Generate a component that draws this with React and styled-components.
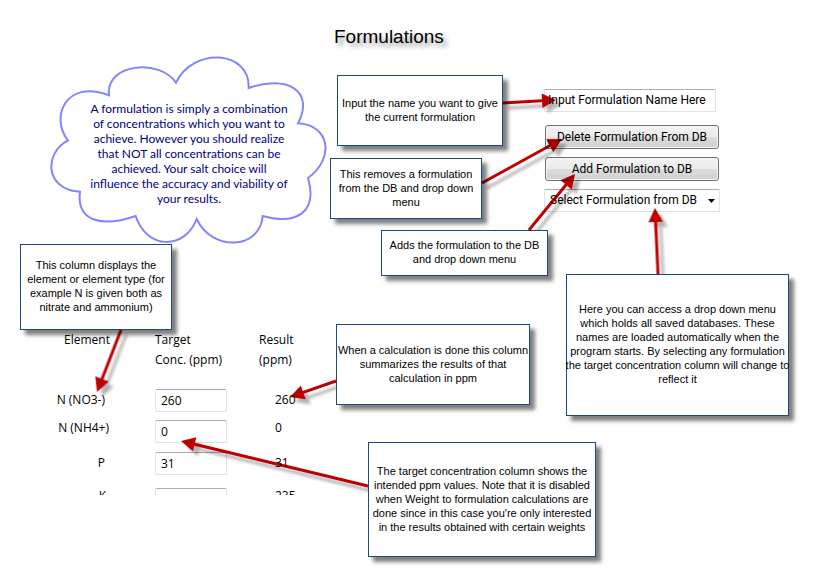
import React from "react";
import styled, { createGlobalStyle } from "styled-components";

const GlobalStyle = createGlobalStyle`
  * { box-sizing: border-box; }
  body {
    margin: 0;
    background: #fff;
    color: #000;
    font-family: "Segoe UI", "Open Sans", "Noto Sans", sans-serif;
    font-size: 12px;
  }
`;

const Page = styled.main`
  position: relative;
  display: flex;
  flex-direction: column;
  min-height: 100vh;
  padding: 25px 0 24px;
  overflow: hidden;
`;

const Title = styled.h1`
  margin: 0 0 0 334px;
  font: 400 19px/24px "Liberation Sans", Arial, sans-serif;
  text-shadow: 4px 4px 4px rgba(0, 0, 0, 0.4);
`;

const Form = styled.form`
  display: flex;
  flex-direction: column;
  align-items: flex-start;
  gap: 8px;
  margin: 40px 0 0 544px;
  font-family: "Segoe UI", Roboto, sans-serif;
`;

const NameInput = styled.input`
  width: 172px;
  height: 23px;
  margin-bottom: 5px;
  padding: 0 3px 1px;
  border: 1px solid #e2e3ea;
  border-top-color: #abadb3;
  border-radius: 1px;
  background: #fff;
  font: inherit;
  color: inherit;
`;

const FormButton = styled.button`
  width: 174px;
  height: 24px;
  margin-left: 1px;
  padding: 0;
  border: 1px solid #707070;
  border-radius: 3px;
  background: linear-gradient(#f2f2f2, #ebebeb 48%, #dddddd 52%, #cfcfcf);
  box-shadow: inset 0 0 0 1px #f8f8f8;
  font: inherit;
  color: inherit;
`;

const SelectWrap = styled.div`
  display: grid;
  align-items: center;
  width: 176px;

  & > * { grid-area: 1 / 1; }
`;

const FormulationSelect = styled.select`
  appearance: none;
  width: 100%;
  height: 23px;
  padding: 0 0 1px 5px;
  border: 1px solid #e2e3ea;
  border-top-color: #abadb3;
  border-radius: 1px;
  background: #fff;
  font: inherit;
  color: inherit;
`;

const SelectArrow = styled.svg`
  justify-self: end;
  margin-right: 5px;
  pointer-events: none;
`;

const TableClip = styled.section`
  height: 165px;
  margin: 118px 0 0 40px;
  overflow: hidden;
`;

const ConcentrationTable = styled.table`
  border-collapse: collapse;
  table-layout: fixed;
  width: 288px;
`;

const HeadCell = styled.th`
  width: ${(p) => p.$width}px;
  height: 59px;
  padding: 0 ${(p) => p.$padRight || 0}px 0 0;
  font-weight: 400;
  line-height: 20px;
  text-align: ${(p) => p.$align || "left"};
  vertical-align: top;
`;

const Row = styled.tr`
  height: ${(p) => p.$height}px;
  line-height: ${(p) => (p.$raised ? 16 : 22)}px;

  & > * {
    padding: 0;
    vertical-align: top;
    font-weight: 400;
  }
`;

const ElementCell = styled.th`
  && {
    padding-right: ${(p) => p.$padRight}px;
    text-align: right;
  }
`;

const ResultCell = styled.td`
  && { padding-left: 16px; }
`;

const TargetInput = styled.input`
  display: block;
  width: 72px;
  height: 23px;
  padding: 0 5px 1px;
  border: 1px solid #dfe1ea;
  border-top-color: #abadb3;
  border-radius: 2px;
  background: #fff;
  font: inherit;
  line-height: 20px;
  color: inherit;
`;

const Cloud = styled.aside`
  position: absolute;
  left: 40px;
  top: 50px;
  display: grid;
  width: 290px;
  height: 200px;

  & > * { grid-area: 1 / 1; }
`;

const CloudText = styled.p`
  margin: 51px 0 0;
  padding-left: 8px;
  font: 400 12px/15px "Comic Sans MS", Lato, sans-serif;
  color: #000080;
  text-align: center;
  white-space: pre-line;
`;

const Callout = styled.aside`
  position: absolute;
  left: ${(p) => p.$x}px;
  top: ${(p) => p.$y}px;
  display: flex;
  align-items: center;
  justify-content: center;
  width: ${(p) => p.$w}px;
  min-height: ${(p) => p.$h}px;
  padding-bottom: 2px;
  border: 1px solid #1f497d;
  background: #fff;
  box-shadow: 5px 5px 4px rgba(0, 0, 0, 0.5);
  font: 400 11px/14px "Liberation Sans", Arial, sans-serif;
  text-align: center;
  white-space: pre;
`;

const ArrowLayer = styled.svg`
  position: absolute;
  left: 0;
  top: 0;
  overflow: visible;
  mix-blend-mode: multiply;
  pointer-events: none;
`;

const rows = [
  { element: "N (NO3-)", target: "260", result: "260", height: 31, padRight: 10 },
  { element: "N (NH4+)", target: "0", result: "0", height: 32, padRight: 6, raised: true },
  { element: "P", target: "31", result: "31", height: 36, padRight: 10 },
  { element: "K", target: "235", result: "235", height: 32, padRight: 9, raised: true },
];

const callouts = [
  { x: 337, y: 75, w: 166, h: 71, text: "Input the name you want to give\nthe current formulation" },
  { x: 330, y: 158, w: 152, h: 61, text: "This removes a formulation\nfrom the DB and drop down\nmenu" },
  { x: 381, y: 230, w: 167, h: 46, text: "Adds the formulation to the DB\nand drop down menu" },
  { x: 20, y: 244, w: 152, h: 86, text: "This column displays the\nelement or element type (for\nexample N is given both as\nnitrate and ammonium)" },
  { x: 336, y: 324, w: 194, h: 81, text: "When a calculation is done this column\nsummarizes the results of that\ncalculation in ppm" },
  { x: 566, y: 274, w: 223, h: 142, text: "Here you can access a drop down menu\nwhich holds all saved databases. These\nnames are loaded automatically when the\nprogram starts. By selecting any formulation\nthe target concentration column will change to\nreflect it" },
  { x: 368, y: 442, w: 228, h: 115, text: "The target concentration column shows the\nintended ppm values. Note that it is disabled\nwhen Weight to formulation calculations are\ndone since in this case you're only interested\nin the results obtained with certain weights" },
];

const arrows = [
  [503, 103, 556, 100],
  [482, 183, 562, 139],
  [529, 230, 575, 174],
  [658, 274, 655, 208],
  [121, 330, 97, 392],
  [336, 381, 290, 397],
  [368, 486, 181, 441],
];

function Arrow({ points: [x1, y1, x2, y2] }) {
  const length = Math.hypot(x2 - x1, y2 - y1);
  const angle = (Math.atan2(y2 - y1, x2 - x1) * 180) / Math.PI;
  return (
    <g transform={`translate(${x1} ${y1}) rotate(${angle})`}>
      <path
        d={`M0,-1.5 H${length - 14} V-7.3 L${length},0 L${length - 14},7.3 V1.5 H0 Z`}
      />
    </g>
  );
}

export default function App() {
  return (
    <>
      <GlobalStyle />
      <Page>
        <Title>Formulations</Title>

        <Form onSubmit={(e) => e.preventDefault()}>
          <NameInput aria-label="Formulation name" defaultValue="Input Formulation Name Here" />
          <FormButton type="button">Delete Formulation From DB</FormButton>
          <FormButton type="button">Add Formulation to DB</FormButton>
          <SelectWrap>
            <FormulationSelect aria-label="Saved formulation">
              <option>Select Formulation from DB</option>
            </FormulationSelect>
            <SelectArrow width="7" height="4" viewBox="0 0 7 4" aria-hidden="true">
              <path d="M0 0H7L3.5 4Z" />
            </SelectArrow>
          </SelectWrap>
        </Form>

        <TableClip>
          <ConcentrationTable>
            <thead>
              <tr>
                <HeadCell scope="col" $width={115} $align="right" $padRight={45}>Element</HeadCell>
                <HeadCell scope="col" $width={104}>Target<br />Conc. (ppm)</HeadCell>
                <HeadCell scope="col" $width={69}>Result<br />(ppm)</HeadCell>
              </tr>
            </thead>
            <tbody>
              {rows.map((r) => (
                <Row key={r.element} $height={r.height} $raised={r.raised}>
                  <ElementCell scope="row" $padRight={r.padRight + 40}>{r.element}</ElementCell>
                  <td>
                    <TargetInput aria-label={`${r.element} target concentration`} defaultValue={r.target} />
                  </td>
                  <ResultCell>{r.result}</ResultCell>
                </Row>
              ))}
            </tbody>
          </ConcentrationTable>
        </TableClip>

        <Cloud>
          <svg width="290" height="200" viewBox="0 0 870 600" aria-hidden="true">
            <path
              fill="#fff"
              stroke="#8484fb"
              strokeWidth="6"
              d="M207,136 C195,40 360,25 408,98 C460,-10 630,0 626,114 C740,75 825,120 774,220 C870,225 885,325 804,384 C835,490 765,525 668,498 C660,600 515,605 470,507 C435,600 320,600 287,498 C195,530 108,520 120,425 C15,420 10,310 84,271 C30,205 75,85 207,136 Z"
            />
          </svg>
          <CloudText>
            {"A formulation is simply a combination\nof concentrations which you want to\nachieve. However you should realize\nthat NOT all concentrations can be\nachieved. Your salt choice will\ninfluence the accuracy and viability of\nyour results."}
          </CloudText>
        </Cloud>

        {callouts.map((c) => (
          <Callout key={c.text} $x={c.x} $y={c.y} $w={c.w} $h={c.h}>{c.text}</Callout>
        ))}

        <ArrowLayer width="818" height="587" aria-hidden="true">
          <defs>
            <filter id="arrow-shadow" x="-10%" y="-10%" width="120%" height="120%">
              <feGaussianBlur stdDeviation="1.5" />
            </filter>
            <clipPath id="outside-callouts">
              <path
                clipRule="evenodd"
                d={"M0,0H818V587H0Z" + callouts.map((c) => `M${c.x},${c.y}h${c.w}v${c.h}h${-c.w}Z`).join("")}
              />
            </clipPath>
          </defs>
          <g clipPath="url(#outside-callouts)">
            <g fill="#000" opacity="0.3" filter="url(#arrow-shadow)" transform="translate(5 5)">
              {arrows.map((a) => <Arrow key={a.join()} points={a} />)}
            </g>
          </g>
          <g fill="#c00000">
            {arrows.map((a) => <Arrow key={a.join()} points={a} />)}
          </g>
        </ArrowLayer>
      </Page>
    </>
  );
}
